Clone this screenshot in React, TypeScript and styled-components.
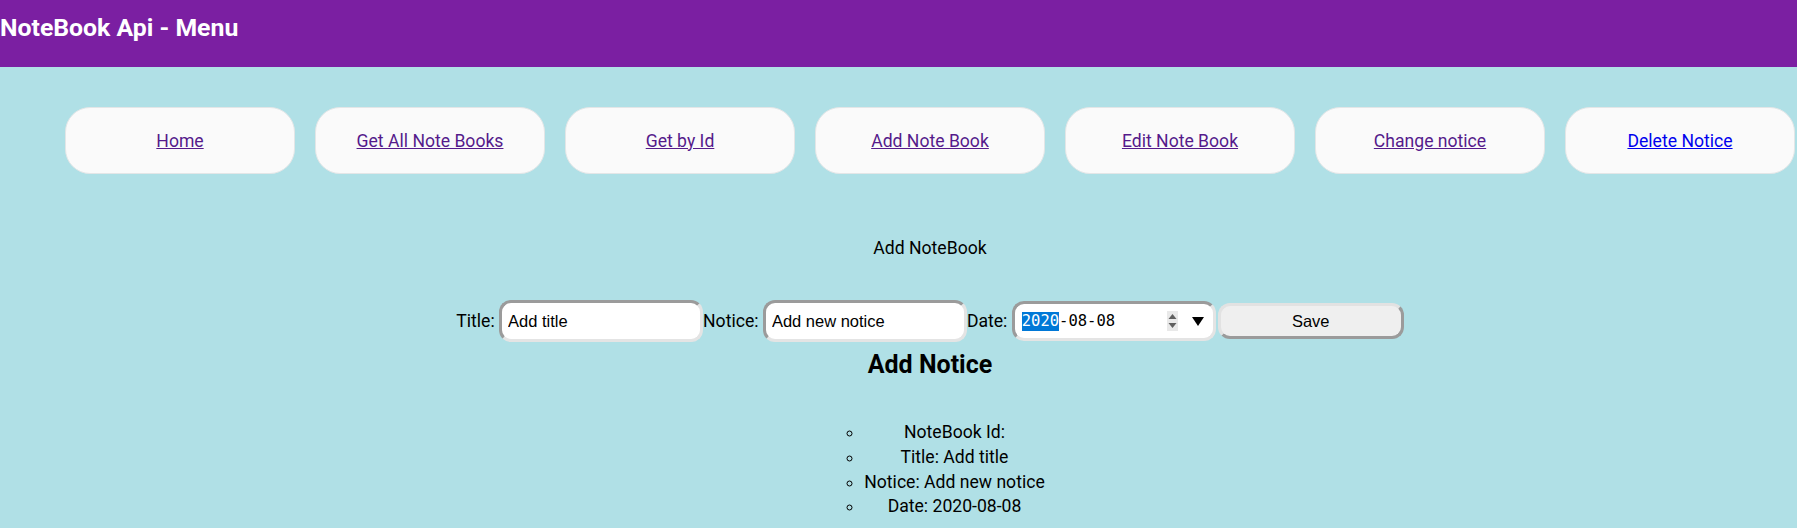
import React from "react";
import styled, { createGlobalStyle } from "styled-components";

const GlobalStyle = createGlobalStyle`
  html, body {
    margin: 0;
    padding: 0;
    background: #b0e0e6;
    font-family: Roboto, "Noto Sans", sans-serif;
    color: #000;
  }
  body {
    overflow: hidden;
    min-height: 528px;
  }
`;

const Header = styled.header`
  box-sizing: border-box;
  height: 67px;
  padding-top: 13px;
  background: #7b1fa2;
`;

const HeaderTitle = styled.h1`
  margin: 0;
  font-family: Roboto, sans-serif;
  font-size: 24.8px;
  font-weight: 700;
  line-height: normal;
  color: #ffffff;
`;

const Main = styled.main`
  padding-left: 63px;
  font-size: 17.6px;
`;

const Nav = styled.nav`
  display: flex;
  justify-content: center;
  gap: 20px;
  margin-top: 40px;
`;

const NavButton = styled.div`
  box-sizing: border-box;
  width: 230px;
  height: 67px;
  flex: none;
  display: flex;
  align-items: center;
  justify-content: center;
  background: #fafafa;
  border: 1px solid #e3e6e7;
  border-radius: 25px;
`;

const NavLink = styled.a<{ $visited?: boolean }>`
  font-family: Roboto, sans-serif;
  font-size: 17.6px;
  line-height: normal;
  color: ${(p) => (p.$visited ? "#551a8b" : "#0000ee")};
  text-decoration: underline;
  cursor: pointer;
`;

const Caption = styled.p`
  margin: 64px 0 0;
  text-align: center;
  line-height: normal;
`;

const FormRow = styled.form`
  display: flex;
  justify-content: center;
  align-items: center;
  height: 42px;
  margin-top: 42px;
`;

const Label = styled.label`
  font-size: 17.6px;
  margin-right: 4.4px;
  white-space: pre;
`;

const TextInput = styled.input`
  box-sizing: border-box;
  width: 204px;
  height: 42px;
  margin: 0;
  padding: 0 6px;
  font-family: "Liberation Sans", Arial, sans-serif;
  font-size: 16.5px;
  color: #000;
  background: #ffffff;
  border: 3px solid;
  border-color: #9b9b9b #e4e4e4 #e4e4e4 #9b9b9b;
  border-radius: 12px;
  outline: none;
`;

const DateBox = styled.div`
  box-sizing: border-box;
  width: 204px;
  height: 40px;
  display: flex;
  align-items: center;
  padding: 0 9px 0 7px;
  background: #ffffff;
  border: 3px solid;
  border-color: #9b9b9b #e4e4e4 #e4e4e4 #9b9b9b;
  border-radius: 12px;
`;

const DateSegment = styled.span<{ $selected?: boolean }>`
  font-family: "DejaVu Sans Mono", "Liberation Mono", monospace;
  font-size: 15.5px;
  line-height: 19px;
  color: ${(p) => (p.$selected ? "#ffffff" : "#000000")};
  background: ${(p) => (p.$selected ? "#0078d7" : "transparent")};
`;

const Spinner = styled.span`
  margin-left: auto;
  width: 11px;
  height: 20px;
  background: #e9e9e9;
  display: flex;
  align-items: center;
  justify-content: center;
`;

const Dropdown = styled.span`
  margin-left: 14px;
  display: flex;
  align-items: center;
`;

const SaveButton = styled.button`
  box-sizing: border-box;
  width: 186px;
  height: 36px;
  margin: 0 0 0 2px;
  font-family: "Liberation Sans", Arial, sans-serif;
  font-size: 16.5px;
  color: #000;
  background: #efefef;
  border: 3px solid;
  border-color: #e2e2e2 #9b9b9b #9b9b9b #e2e2e2;
  border-radius: 12px;
`;

const SectionTitle = styled.h2`
  margin: 8px 0 0;
  text-align: center;
  font-size: 25px;
  font-weight: 700;
  line-height: normal;
`;

const List = styled.ul`
  width: fit-content;
  margin: 41px auto 0;
  padding: 0 0 0 49px;
  list-style: circle;
  line-height: 24.8px;
`;

const ListItem = styled.li`
  text-align: center;
  font-size: 17.6px;
`;

const links = [
  { label: "Home", visited: true },
  { label: "Get All Note Books", visited: true },
  { label: "Get by Id", visited: true },
  { label: "Add Note Book", visited: true },
  { label: "Edit Note Book", visited: true },
  { label: "Change notice", visited: true },
  { label: "Delete Notice", visited: false },
];

export default function App() {
  const title = "Add title";
  const notice = "Add new notice";
  const date = "2020-08-08";
  return (
    <>
      <GlobalStyle />
      <Header>
        <HeaderTitle>NoteBook Api - Menu</HeaderTitle>
      </Header>
      <Main>
        <Nav>
          {links.map((l) => (
            <NavButton key={l.label}>
              <NavLink $visited={l.visited}>{l.label}</NavLink>
            </NavButton>
          ))}
        </Nav>
        <Caption>Add NoteBook</Caption>
        <FormRow onSubmit={(e) => e.preventDefault()}>
          <Label>Title:</Label>
          <TextInput defaultValue={title} />
          <Label>Notice:</Label>
          <TextInput defaultValue={notice} />
          <Label>Date:</Label>
          <DateBox>
            <DateSegment $selected>2020</DateSegment>
            <DateSegment>-08-08</DateSegment>
            <Spinner>
              <svg width="9" height="16" viewBox="0 0 9 16">
                <polygon points="4.5,1 8.5,6 0.5,6" fill="#5f5f5f" />
                <polygon points="0.5,10 8.5,10 4.5,15" fill="#5f5f5f" />
              </svg>
            </Spinner>
            <Dropdown>
              <svg width="12" height="9" viewBox="0 0 12 9">
                <polygon points="0,0 12,0 6,9" fill="#000" />
              </svg>
            </Dropdown>
          </DateBox>
          <SaveButton type="button">Save</SaveButton>
        </FormRow>
        <SectionTitle>Add Notice</SectionTitle>
        <List>
          <ListItem>NoteBook Id:</ListItem>
          <ListItem>Title: {title}</ListItem>
          <ListItem>Notice: {notice}</ListItem>
          <ListItem>Date: {date}</ListItem>
        </List>
      </Main>
    </>
  );
}
